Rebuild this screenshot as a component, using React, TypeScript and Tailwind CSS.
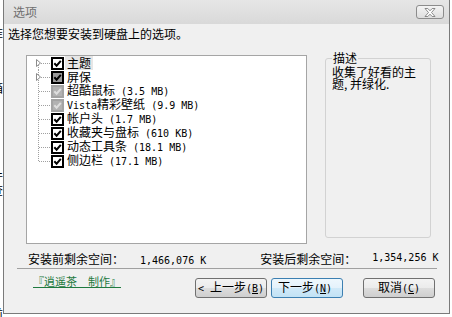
import React from 'react';

type Kind = 'on' | 'gray' | 'off';

const Mono = ({ children }: { children: React.ReactNode }) => (
  <span className="font-['DejaVu_Sans_Mono'] text-[10px]">{children}</span>
);

const rows: { name: React.ReactNode; size?: string; kind: Kind; toggle?: boolean }[] = [
  { name: '主题', kind: 'on', toggle: true },
  { name: '屏保', kind: 'gray', toggle: true },
  { name: '超酷鼠标', size: ' (3.5 MB)', kind: 'off' },
  { name: <><Mono>Vista</Mono>精彩壁纸</>, size: ' (9.9 MB)', kind: 'off' },
  { name: '帐户头', size: ' (1.7 MB)', kind: 'on' },
  { name: '收藏夹与盘标', size: ' (610 KB)', kind: 'on' },
  { name: '动态工具条', size: ' (18.1 MB)', kind: 'on' },
  { name: '侧边栏', size: ' (17.1 MB)', kind: 'on' },
];

function Check({ kind }: { kind: Kind }) {
  const c =
    kind === 'on'
      ? { fill: '#ffffff', stroke: '#000000', mark: '#000000' }
      : kind === 'gray'
      ? { fill: '#9a9a9a', stroke: '#000000', mark: '#000000' }
      : { fill: '#b2b2b2', stroke: '#a3a3a3', mark: '#dedede' };
  return (
    <svg width="13" height="13" viewBox="0 0 13 13" className="shrink-0">
      <rect x="1" y="1" width="11" height="11" fill={c.fill} stroke={c.stroke} strokeWidth="2" />
      <path d="M3.3 6.3 L5.6 8.7 L9.8 3.8" fill="none" stroke={c.mark} strokeWidth="2" />
    </svg>
  );
}

function Lines({ first, last, toggle }: { first: boolean; last: boolean; toggle?: boolean }) {
  return (
    <svg width="24" height="14" viewBox="0 0 24 14" className="shrink-0">
      <line x1="11.5" y1={first ? 7 : 0} x2="11.5" y2={last ? 7 : 14} stroke="#a0a0a0" strokeDasharray="1 1" />
      <line x1="12" y1="7.5" x2="23" y2="7.5" stroke="#a0a0a0" strokeDasharray="1 1" />
      {toggle && <path d="M9.5 3.5 L9.5 10.5 L13.5 7 Z" fill="#ffffff" stroke="#8c8c8c" />}
    </svg>
  );
}

function Btn({ children, focus, className }: { children: React.ReactNode; focus?: boolean; className?: string }) {
  return (
    <div
      className={
        'flex h-[20px] w-[72px] items-center overflow-hidden rounded-[3px] border text-[12px] leading-[14px] ' +
        (focus
          ? 'border-[#3c7fb1] bg-[linear-gradient(#eef7fd_0%,#e4f2fb_50%,#d0e9f8_50%,#c2e2f5_100%)] '
          : 'border-[#707070] bg-[linear-gradient(#f3f3f3_0%,#ebebeb_50%,#dddddd_50%,#cfcfcf_100%)] ') +
        (className ?? '')
      }
    >
      <span className="shrink-0 whitespace-pre">{children}</span>
    </div>
  );
}

export default function App() {
  return (
    <div className="flex h-[317px] w-[452px] overflow-hidden bg-white font-['Noto_Sans_CJK_SC',sans-serif] text-[12px] text-black">
      <div className="w-[3px] shrink-0 overflow-hidden">
        <div className="-ml-[9px] flex w-[12px] flex-col text-[12px] leading-[14px]">
          <span className="mt-[27px]">菲</span>
          <span className="mt-[40px]">箱</span>
          <span className="mt-[74px]">件</span>
          <span className="mt-[0px]">查</span>
          <span className="mt-[97px]">/</span>
          <span className="mt-[-1px]">前</span>
        </div>
      </div>

      <div className="flex h-[314px] w-[447px] shrink-0 flex-col border-x border-b border-[#7a7a7a] bg-[#f0f0f0]">
        <div className="flex h-[24px] items-center justify-between bg-gradient-to-b from-[#e6e6e6] to-[#d9d9d9] pl-[9px] pr-[5px]">
          <span className="leading-[14px] text-[#6f6f6f]">选项</span>
          <div className="flex h-[14px] w-[28px] items-center justify-center rounded-[3px] border border-[#8c8c8c] bg-gradient-to-b from-[#f4f4f4] to-[#dedede]">
            <svg width="12" height="9" viewBox="0 0 12 9">
              <path
                d="M1 0.5 H3.8 L6 2.8 L8.2 0.5 H11 L7.5 4.5 L11 8.5 H8.2 L6 6.2 L3.8 8.5 H1 L4.5 4.5 Z"
                fill="#ffffff"
                stroke="#7d7d7d"
                strokeWidth="0.9"
                strokeLinejoin="round"
              />
            </svg>
          </div>
        </div>

        <div className="mt-[3px] h-[14px] pl-[4px] leading-[14px]">选择您想要安装到硬盘上的选项。</div>

        <div className="flex items-start">
          <div className="ml-[22px] mt-[14px] h-[189px] w-[281px] shrink-0 border border-[#a5a5a5] bg-white">
            {rows.map((r, i) => (
              <div key={i} className="flex h-[14px] items-center">
                <Lines first={i === 0} last={i === rows.length - 1} toggle={r.toggle} />
                <Check kind={r.kind} />
                <span className={'ml-[1px] whitespace-pre px-[2px] leading-[14px] ' + (i === 0 ? 'bg-[#e6e6e6]' : '')}>
                  {r.name}
                  {r.size && <Mono>{r.size}</Mono>}
                </span>
              </div>
            ))}
          </div>

          <fieldset className="ml-[18px] mt-[11px] h-[186px] w-[106px] shrink-0 rounded-[3px] border border-[#d2d2d2] px-[6px]">
            <legend className="px-[1px] text-[12px] leading-[12px]">描述</legend>
            <div className="mt-[2px] leading-[12px]">收集了好看的主题, 并绿化.</div>
          </fieldset>
        </div>

        <div className="mt-[8px] flex h-[14px] items-center pl-[24px] leading-[14px]">
          <span className="w-[96px]">安装前剩余空间：</span>
          <span className="ml-[16px] mt-[2px]">
            <Mono>1,466,076 K</Mono>
          </span>
          <span className="ml-[54px] w-[96px]">安装后剩余空间：</span>
          <span className="mb-[4px] ml-[16px]">
            <Mono>1,354,256 K</Mono>
          </span>
        </div>

        <div className="ml-[13px] mt-[2px] h-px w-[420px] bg-[#a0a0a0]" />

        <div className="flex items-start">
          <div className="w-[191px] shrink-0 pl-[29px] pt-[3px]">
            <span className="text-[11px] leading-[14px] text-[#1f7a3f] underline">『逍遥茶　制作』</span>
          </div>
          <div className="mt-[9px] flex">
            <Btn className="justify-center">
              <Mono>{'< '}</Mono>上一步<Mono>(<u>B</u>)</Mono>
            </Btn>
            <Btn focus className="ml-[4px] justify-start pl-[6px]">
              下一步<Mono>(<u>N</u>)  {'>'}</Mono>
            </Btn>
            <Btn className="ml-[20px] justify-center">
              取消<Mono>(<u>C</u>)</Mono>
            </Btn>
          </div>
        </div>
      </div>
    </div>
  );
}
